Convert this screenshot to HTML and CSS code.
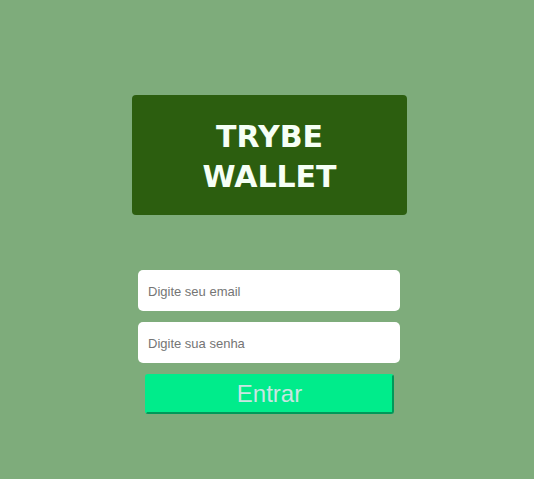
FILE: index.html
```html
<!DOCTYPE html>
<html lang="pt">
<head>
<meta charset="utf-8">
<title>Trybe Wallet</title>
<link rel="stylesheet" href="styles.css">
</head>
<body>
<main class="page">
  <h1 class="logo">TRYBE<br>WALLET</h1>
  <form class="login">
    <input class="field" type="email" placeholder="Digite seu email">
    <input class="field" type="password" placeholder="Digite sua senha">
    <button class="enter" type="button">Entrar</button>
  </form>
</main>
</body>
</html>
```
FILE: styles.css
```css
html, body {
  margin: 0;
  padding: 0;
  background: #7eac7b;
  height: 100%;
}
.page {
  display: flex;
  flex-direction: column;
  align-items: center;
  padding: 95px 0 0 5px;
  font-family: "Liberation Sans", Arial, sans-serif;
}
.logo {
  box-sizing: border-box;
  width: 275px;
  height: 120px;
  margin: 0;
  padding: 22px 0 0;
  background: #2c5e0f;
  border-radius: 4px;
  color: #f6fff6;
  font-family: "DejaVu Sans", Verdana, sans-serif;
  font-weight: bold;
  font-size: 30px;
  line-height: 40px;
  text-align: center;
}
.login {
  display: flex;
  flex-direction: column;
  align-items: center;
  gap: 11px;
  margin-top: 55px;
}
.field {
  box-sizing: border-box;
  width: 262px;
  height: 41px;
  margin-right: 1px;
  border: none;
  border-radius: 5px;
  background: #fff;
  padding: 1px 10px 0;
  font-family: "Liberation Sans", Arial, sans-serif;
  font-size: 13px;
  color: #333;
  outline: none;
}
.field::placeholder {
  color: #757575;
}
.enter {
  box-sizing: border-box;
  width: 249px;
  height: 40px;
  background: #00ec8b;
  border: 2px outset #00ec8b;
  border-radius: 3px;
  color: #c8e6e2;
  font-family: "Liberation Sans", Arial, sans-serif;
  font-size: 24px;
  padding: 0;
  line-height: 34px;
}
```
